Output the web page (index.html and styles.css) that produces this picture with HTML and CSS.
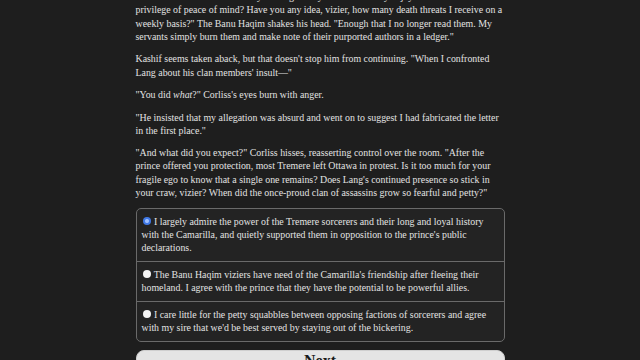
FILE: index.html
```html
<!DOCTYPE html>
<html lang="en">
<head>
<meta charset="utf-8">
<title>Choice</title>
<link rel="stylesheet" href="styles.css">
</head>
<body>
<div class="page">
  <div class="text">
    <p>"Protection? From whom? Do you imagine any of us in this city enjoys the<br>privilege of peace of mind? Have you any idea, vizier, how many death threats I receive on a weekly basis?" The Banu Haqim shakes his head. "Enough that I no longer read them. My servants simply burn them and make note of their purported authors in a ledger."</p>
    <p>Kashif seems taken aback, but that doesn't stop him from continuing. "When I confronted Lang about his clan members' insult—"</p>
    <p>"You did <i>what</i>?" Corliss's eyes burn with anger.</p>
    <p>"He insisted that my allegation was absurd and went on to suggest I had fabricated the letter in the first place."</p>
    <p>"And what did you expect?" Corliss hisses, reasserting control over the room. "After the prince offered you protection, most Tremere left Ottawa in protest. Is it too much for your fragile ego to know that a single one remains? Does Lang's continued presence so stick in your craw, vizier? When did the once-proud clan of assassins grow so fearful and petty?"</p>
  </div>
  <div class="choices">
    <label class="choice"><span class="radio checked"></span> I largely admire the power of the Tremere sorcerers and their long and loyal history with the Camarilla, and quietly supported them in opposition to the prince's public declarations.</label>
    <label class="choice"><span class="radio"></span> The Banu Haqim viziers have need of the Camarilla's friendship after fleeing their homeland. I agree with the prince that they have the potential to be powerful allies.</label>
    <label class="choice"><span class="radio"></span> I care little for the petty squabbles between opposing factions of sorcerers and agree with my sire that we'd be best served by staying out of the bickering.</label>
  </div>
  <button class="next">Next</button>
</div>
</body>
</html>
```

FILE: styles.css
```css
html, body {
  margin: 0;
  padding: 0;
  background: #1e1e1e;
}
body {
  font-family: "Liberation Serif", "Times New Roman", serif;
  font-size: 9.9px;
  line-height: 13.2px;
  color: #e2e2e2;
  overflow: hidden;
}
.page {
  width: 369px;
  margin: -9.8px auto 0;
}
.text p {
  margin: 0 0 9.3px;
}
.choices {
  margin-top: 8.6px;
  border: 1px solid #6a6a6a;
  border-radius: 5px;
  background: #232323;
  display: flex;
  flex-direction: column;
}
.choice {
  display: block;
  line-height: 13.3px;
  padding: 5.4px 6px 6.8px 5px;
  border-top: 1px solid #6a6a6a;
}
.choice:first-child {
  border-top: none;
}
.radio {
  display: inline-block;
  width: 8px;
  height: 8px;
  border-radius: 50%;
  background: #f4f4f4;
  vertical-align: -0.5px;
  margin-left: 1px;
  margin-right: 1px;
}
.radio.checked {
  background: radial-gradient(circle, #9fc0ff 0 1.5px, #3f78e6 2.5px);
}
.next {
  display: block;
  width: 100%;
  margin-top: 8.5px;
  padding: 1.5px 0 14px;
  border: 1px solid #cfcfcf;
  border-radius: 8px;
  background: #e4e4e4;
  color: #1a1a1a;
  font-family: "Liberation Serif", "Times New Roman", serif;
  font-weight: bold;
  font-size: 16px;
  line-height: 16px;
}
```
